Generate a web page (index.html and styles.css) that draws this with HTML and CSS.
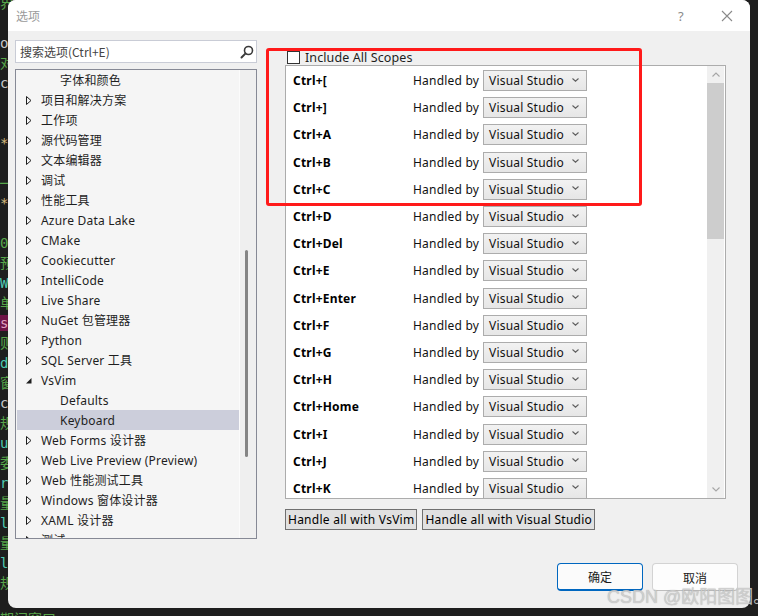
FILE: index.html
```html
<!DOCTYPE html>
<html>
<head>
<meta charset="utf-8">
<link rel="stylesheet" href="styles.css">
</head>
<body>
<div class="desk">
<pre class="code"><span class="g">界</span>

<span class="w">oF</span>
<span class="g">对</span>
<span class="w">co</span>


<span class="t">*</span>

<span class="g">──</span>
<span class="t">*</span>

<span class="g">0</span>
<span class="g">预</span>
<span class="c">Wi</span>
<span class="g">单</span>
<span class="m">st</span>
<span class="g">则</span>
<span class="c">de</span>
<span class="g">窗</span>
<span class="w">cr</span>
<span class="g">规</span>
<span class="c">ur</span>
<span class="g">委</span>
<span class="c">rV</span>
<span class="g">量</span>
<span class="c">lu</span>
<span class="g">量</span>
<span class="c">lu</span>
<span class="g">规</span></pre>
<div class="taskline">期间窗口</div>

<div class="dialog">
  <div class="titlebar">
    <span class="title">选项</span>
    <span class="tbtn">?</span>
    <span class="tbtn"><svg width="12" height="12" viewBox="0 0 12 12"><path d="M1 1L11 11M11 1L1 11" stroke="#8a8a8a" stroke-width="1.1" fill="none"/></svg></span>
  </div>
  <div class="main">
    <div class="leftcol">
      <div class="search">
        <span class="ph">搜索选项(Ctrl+E)</span>
        <svg class="mag" width="14" height="14" viewBox="0 0 14 14"><circle cx="8.5" cy="5.5" r="4" stroke="#3a3a3a" stroke-width="1.6" fill="none"/><path d="M5.6 8.4L1.5 12.5" stroke="#3a3a3a" stroke-width="2" stroke-linecap="round"/></svg>
      </div>
      <div class="tree">
        <div class="tree-list">
          <div class="node l2">字体和颜色</div>
          <div class="node"><svg class="arr" width="6" height="9" viewBox="0 0 6 9"><path d="M0.5 0.5L5 4.5L0.5 8.5Z" fill="none" stroke="#1e1e1e"/></svg>项目和解决方案</div>
          <div class="node"><svg class="arr" width="6" height="9" viewBox="0 0 6 9"><path d="M0.5 0.5L5 4.5L0.5 8.5Z" fill="none" stroke="#1e1e1e"/></svg>工作项</div>
          <div class="node"><svg class="arr" width="6" height="9" viewBox="0 0 6 9"><path d="M0.5 0.5L5 4.5L0.5 8.5Z" fill="none" stroke="#1e1e1e"/></svg>源代码管理</div>
          <div class="node"><svg class="arr" width="6" height="9" viewBox="0 0 6 9"><path d="M0.5 0.5L5 4.5L0.5 8.5Z" fill="none" stroke="#1e1e1e"/></svg>文本编辑器</div>
          <div class="node"><svg class="arr" width="6" height="9" viewBox="0 0 6 9"><path d="M0.5 0.5L5 4.5L0.5 8.5Z" fill="none" stroke="#1e1e1e"/></svg>调试</div>
          <div class="node"><svg class="arr" width="6" height="9" viewBox="0 0 6 9"><path d="M0.5 0.5L5 4.5L0.5 8.5Z" fill="none" stroke="#1e1e1e"/></svg>性能工具</div>
          <div class="node"><svg class="arr" width="6" height="9" viewBox="0 0 6 9"><path d="M0.5 0.5L5 4.5L0.5 8.5Z" fill="none" stroke="#1e1e1e"/></svg>Azure Data Lake</div>
          <div class="node"><svg class="arr" width="6" height="9" viewBox="0 0 6 9"><path d="M0.5 0.5L5 4.5L0.5 8.5Z" fill="none" stroke="#1e1e1e"/></svg>CMake</div>
          <div class="node"><svg class="arr" width="6" height="9" viewBox="0 0 6 9"><path d="M0.5 0.5L5 4.5L0.5 8.5Z" fill="none" stroke="#1e1e1e"/></svg>Cookiecutter</div>
          <div class="node"><svg class="arr" width="6" height="9" viewBox="0 0 6 9"><path d="M0.5 0.5L5 4.5L0.5 8.5Z" fill="none" stroke="#1e1e1e"/></svg>IntelliCode</div>
          <div class="node"><svg class="arr" width="6" height="9" viewBox="0 0 6 9"><path d="M0.5 0.5L5 4.5L0.5 8.5Z" fill="none" stroke="#1e1e1e"/></svg>Live Share</div>
          <div class="node"><svg class="arr" width="6" height="9" viewBox="0 0 6 9"><path d="M0.5 0.5L5 4.5L0.5 8.5Z" fill="none" stroke="#1e1e1e"/></svg>NuGet 包管理器</div>
          <div class="node"><svg class="arr" width="6" height="9" viewBox="0 0 6 9"><path d="M0.5 0.5L5 4.5L0.5 8.5Z" fill="none" stroke="#1e1e1e"/></svg>Python</div>
          <div class="node"><svg class="arr" width="6" height="9" viewBox="0 0 6 9"><path d="M0.5 0.5L5 4.5L0.5 8.5Z" fill="none" stroke="#1e1e1e"/></svg>SQL Server 工具</div>
          <div class="node"><svg class="arr" width="6" height="9" viewBox="0 0 6 9"><path d="M5.5 2L5.5 7.5L0 7.5Z" fill="#1e1e1e"/></svg>VsVim</div>
          <div class="node l2">Defaults</div>
          <div class="node l2 sel">Keyboard</div>
          <div class="node"><svg class="arr" width="6" height="9" viewBox="0 0 6 9"><path d="M0.5 0.5L5 4.5L0.5 8.5Z" fill="none" stroke="#1e1e1e"/></svg>Web Forms 设计器</div>
          <div class="node"><svg class="arr" width="6" height="9" viewBox="0 0 6 9"><path d="M0.5 0.5L5 4.5L0.5 8.5Z" fill="none" stroke="#1e1e1e"/></svg>Web Live Preview (Preview)</div>
          <div class="node"><svg class="arr" width="6" height="9" viewBox="0 0 6 9"><path d="M0.5 0.5L5 4.5L0.5 8.5Z" fill="none" stroke="#1e1e1e"/></svg>Web 性能测试工具</div>
          <div class="node"><svg class="arr" width="6" height="9" viewBox="0 0 6 9"><path d="M0.5 0.5L5 4.5L0.5 8.5Z" fill="none" stroke="#1e1e1e"/></svg>Windows 窗体设计器</div>
          <div class="node"><svg class="arr" width="6" height="9" viewBox="0 0 6 9"><path d="M0.5 0.5L5 4.5L0.5 8.5Z" fill="none" stroke="#1e1e1e"/></svg>XAML 设计器</div>
          <div class="node"><svg class="arr" width="6" height="9" viewBox="0 0 6 9"><path d="M0.5 0.5L5 4.5L0.5 8.5Z" fill="none" stroke="#1e1e1e"/></svg>测试</div>
        </div>
        <div class="tree-scroll"><div class="tthumb"></div></div>
      </div>
    </div>

    <div class="rightcol">
      <div class="scopes"><span class="cb"></span><span>Include All Scopes</span></div>
      <div class="keylist">
        <div class="rows">
          <div class="row"><span class="key">Ctrl+[</span><span class="hb">Handled by</span><span class="combo">Visual Studio<svg class="chev" width="7" height="4" viewBox="0 0 7 4"><path d="M0.5 0.5L3.5 3.2L6.5 0.5" stroke="#606060" fill="none" stroke-width="1.1"/></svg></span></div>
          <div class="row"><span class="key">Ctrl+]</span><span class="hb">Handled by</span><span class="combo">Visual Studio<svg class="chev" width="7" height="4" viewBox="0 0 7 4"><path d="M0.5 0.5L3.5 3.2L6.5 0.5" stroke="#606060" fill="none" stroke-width="1.1"/></svg></span></div>
          <div class="row"><span class="key">Ctrl+A</span><span class="hb">Handled by</span><span class="combo">Visual Studio<svg class="chev" width="7" height="4" viewBox="0 0 7 4"><path d="M0.5 0.5L3.5 3.2L6.5 0.5" stroke="#606060" fill="none" stroke-width="1.1"/></svg></span></div>
          <div class="row"><span class="key">Ctrl+B</span><span class="hb">Handled by</span><span class="combo">Visual Studio<svg class="chev" width="7" height="4" viewBox="0 0 7 4"><path d="M0.5 0.5L3.5 3.2L6.5 0.5" stroke="#606060" fill="none" stroke-width="1.1"/></svg></span></div>
          <div class="row"><span class="key">Ctrl+C</span><span class="hb">Handled by</span><span class="combo">Visual Studio<svg class="chev" width="7" height="4" viewBox="0 0 7 4"><path d="M0.5 0.5L3.5 3.2L6.5 0.5" stroke="#606060" fill="none" stroke-width="1.1"/></svg></span></div>
          <div class="row"><span class="key">Ctrl+D</span><span class="hb">Handled by</span><span class="combo">Visual Studio<svg class="chev" width="7" height="4" viewBox="0 0 7 4"><path d="M0.5 0.5L3.5 3.2L6.5 0.5" stroke="#606060" fill="none" stroke-width="1.1"/></svg></span></div>
          <div class="row"><span class="key">Ctrl+Del</span><span class="hb">Handled by</span><span class="combo">Visual Studio<svg class="chev" width="7" height="4" viewBox="0 0 7 4"><path d="M0.5 0.5L3.5 3.2L6.5 0.5" stroke="#606060" fill="none" stroke-width="1.1"/></svg></span></div>
          <div class="row"><span class="key">Ctrl+E</span><span class="hb">Handled by</span><span class="combo">Visual Studio<svg class="chev" width="7" height="4" viewBox="0 0 7 4"><path d="M0.5 0.5L3.5 3.2L6.5 0.5" stroke="#606060" fill="none" stroke-width="1.1"/></svg></span></div>
          <div class="row"><span class="key">Ctrl+Enter</span><span class="hb">Handled by</span><span class="combo">Visual Studio<svg class="chev" width="7" height="4" viewBox="0 0 7 4"><path d="M0.5 0.5L3.5 3.2L6.5 0.5" stroke="#606060" fill="none" stroke-width="1.1"/></svg></span></div>
          <div class="row"><span class="key">Ctrl+F</span><span class="hb">Handled by</span><span class="combo">Visual Studio<svg class="chev" width="7" height="4" viewBox="0 0 7 4"><path d="M0.5 0.5L3.5 3.2L6.5 0.5" stroke="#606060" fill="none" stroke-width="1.1"/></svg></span></div>
          <div class="row"><span class="key">Ctrl+G</span><span class="hb">Handled by</span><span class="combo">Visual Studio<svg class="chev" width="7" height="4" viewBox="0 0 7 4"><path d="M0.5 0.5L3.5 3.2L6.5 0.5" stroke="#606060" fill="none" stroke-width="1.1"/></svg></span></div>
          <div class="row"><span class="key">Ctrl+H</span><span class="hb">Handled by</span><span class="combo">Visual Studio<svg class="chev" width="7" height="4" viewBox="0 0 7 4"><path d="M0.5 0.5L3.5 3.2L6.5 0.5" stroke="#606060" fill="none" stroke-width="1.1"/></svg></span></div>
          <div class="row"><span class="key">Ctrl+Home</span><span class="hb">Handled by</span><span class="combo">Visual Studio<svg class="chev" width="7" height="4" viewBox="0 0 7 4"><path d="M0.5 0.5L3.5 3.2L6.5 0.5" stroke="#606060" fill="none" stroke-width="1.1"/></svg></span></div>
          <div class="row"><span class="key">Ctrl+I</span><span class="hb">Handled by</span><span class="combo">Visual Studio<svg class="chev" width="7" height="4" viewBox="0 0 7 4"><path d="M0.5 0.5L3.5 3.2L6.5 0.5" stroke="#606060" fill="none" stroke-width="1.1"/></svg></span></div>
          <div class="row"><span class="key">Ctrl+J</span><span class="hb">Handled by</span><span class="combo">Visual Studio<svg class="chev" width="7" height="4" viewBox="0 0 7 4"><path d="M0.5 0.5L3.5 3.2L6.5 0.5" stroke="#606060" fill="none" stroke-width="1.1"/></svg></span></div>
          <div class="row"><span class="key">Ctrl+K</span><span class="hb">Handled by</span><span class="combo">Visual Studio<svg class="chev" width="7" height="4" viewBox="0 0 7 4"><path d="M0.5 0.5L3.5 3.2L6.5 0.5" stroke="#606060" fill="none" stroke-width="1.1"/></svg></span></div>
        </div>
        <div class="vscroll">
          <div class="sbtn"><svg width="8" height="5" viewBox="0 0 8 5"><path d="M0.5 4.5L4 1L7.5 4.5" stroke="#a6a6a6" fill="none" stroke-width="1.1"/></svg></div>
          <div class="vthumb"></div>
          <div class="vtrack"></div>
          <div class="sbtn"><svg width="8" height="5" viewBox="0 0 8 5"><path d="M0.5 0.5L4 4L7.5 0.5" stroke="#a6a6a6" fill="none" stroke-width="1.1"/></svg></div>
        </div>
      </div>
      <div class="bulk">
        <button class="bbtn">Handle all with VsVim</button>
        <button class="bbtn">Handle all with Visual Studio</button>
      </div>
    </div>
  </div>
  <div class="footer">
    <button class="fbtn ok">确定</button>
    <button class="fbtn">取消</button>
  </div>
  <div class="annot"></div>
</div>
<div class="wm">CSDN @欧阳图图。</div>
</div>
</body>
</html>
```

FILE: styles.css
```css
* { box-sizing: border-box; }
html, body { margin: 0; padding: 0; }
body { background: #1e1e1e; }
.desk {
  position: relative;
  width: 758px;
  height: 616px;
  overflow: hidden;
  background: #1e1e1e;
}
.code {
  margin: 0;
  margin-top: -7px;
  font-family: "DejaVu Sans Mono", "Noto Sans CJK SC", monospace;
  font-size: 14px;
  line-height: 20px;
  color: #dcdcdc;
}
.code .g { color: #57a64a; }
.code .w { color: #c8c8c8; }
.code .t { color: #d7ba7d; }
.code .c { color: #4ec9b0; }
.code .m { color: #e0a0c0; background: #6e1446; }
.taskline {
  position: absolute;
  left: 0;
  top: 609px;
  font-family: "Noto Sans CJK SC", sans-serif;
  font-size: 14px;
  line-height: 18px;
  color: #57a64a;
}
.dialog {
  position: absolute;
  left: 8px;
  top: 0;
  width: 742px;
  height: 608px;
  border-radius: 8px;
  overflow: hidden;
  background: #f0f0f0;
  display: flex;
  flex-direction: column;
  font-family: "Noto Sans", "Noto Sans CJK SC", sans-serif;
  font-size: 12px;
  letter-spacing: 0.2px;
  color: #1e1e1e;
}
.titlebar {
  height: 31px;
  background: #ffffff;
  display: flex;
  align-items: center;
  padding-left: 8px;
}
.title {
  flex: 1;
  font-family: "Noto Sans CJK SC", sans-serif;
  font-size: 12px;
  letter-spacing: 0;
  color: #9a9a9a;
}
.tbtn {
  width: 46px;
  height: 31px;
  display: flex;
  align-items: center;
  justify-content: center;
  color: #8a8a8a;
  font-size: 13px;
}
.main {
  display: flex;
  padding: 9px 0 0 7px;
}
.leftcol {
  width: 242px;
  display: flex;
  flex-direction: column;
  gap: 6px;
}
.search {
  height: 23px;
  border: 1px solid #c9ccd6;
  background: #ffffff;
  display: flex;
  align-items: center;
  padding-left: 4px;
  padding-right: 2px;
}
.ph {
  flex: 1;
  font-family: "Noto Sans CJK SC", sans-serif;
  letter-spacing: 0;
  color: #444;
  font-size: 12px;
}
.mag { display: block; }
.tree {
  height: 470px;
  border: 1px solid #868995;
  display: flex;
  overflow: hidden;
}
.tree-list {
  flex: 1;
  background: #f5f5f5;
}
.node {
  height: 20px;
  display: flex;
  align-items: center;
  padding-left: 9px;
  white-space: nowrap;
  margin-left: 1px;
}
.node .arr { margin-right: 9px; flex-shrink: 0; }
.node.l2 { padding-left: 43px; }
.node.sel { background: #cccedb; }
.tree-scroll {
  width: 17px;
  background: #efefef;
  border-left: 1px solid #fbfbfb;
}
.tthumb {
  width: 3px;
  height: 207px;
  margin-top: 180px;
  margin-left: 5px;
  border-radius: 2px;
  background: #858585;
}
.rightcol {
  margin-left: 28px;
  margin-top: 9px;
  width: 441px;
  display: flex;
  flex-direction: column;
}
.scopes {
  height: 16px;
  display: flex;
  align-items: center;
  gap: 5px;
  padding-left: 2px;
  font-size: 12.5px;
  letter-spacing: 0.1px;
}
.cb {
  width: 13px;
  height: 13px;
  border: 1px solid #333;
  background: #fff;
}
.keylist {
  height: 434px;
  border: 1px solid #acacac;
  background: #fff;
  display: flex;
  overflow: hidden;
}
.rows { flex: 1; padding-top: 1px; }
.row {
  height: 27.2px;
  display: flex;
  align-items: center;
  padding-left: 7px;
  white-space: nowrap;
}
.key {
  width: 120px;
  font-weight: bold;
  color: #000;
}
.hb {
  width: 70px;
  color: #111;
}
.combo {
  width: 104px;
  height: 21px;
  border: 1px solid #acacac;
  background: linear-gradient(#f2f2f2, #e6e6e6);
  display: flex;
  align-items: center;
  padding-left: 5px;
  color: #111;
}
.chev { margin-left: auto; margin-right: 7px; margin-top: -2px; }
.vscroll {
  width: 17px;
  display: flex;
  flex-direction: column;
  background: #f0f0f0;
  margin-right: 1px;
}
.sbtn {
  height: 17px;
  display: flex;
  align-items: center;
  justify-content: center;
}
.vthumb { height: 156px; background: #cdcdcd; }
.vtrack { flex: 1; }
.bulk {
  display: flex;
  gap: 5px;
  margin-top: 10px;
}
.bbtn {
  height: 21px;
  border: 1px solid #707070;
  background: #e1e1e1;
  font-family: "Noto Sans", sans-serif;
  font-size: 12px;
  letter-spacing: 0.25px;
  color: #000;
  padding: 0 2px;
  border-radius: 0;
  line-height: 17px;
}
.footer {
  display: flex;
  justify-content: flex-end;
  gap: 9px;
  padding-right: 12px;
  margin-top: 24px;
}
.fbtn {
  width: 86px;
  height: 28px;
  border: 1px solid #d3d3d3;
  border-bottom-color: #bdbdbd;
  border-radius: 4px;
  background: #fdfdfd;
  font-family: "Noto Sans CJK SC", sans-serif;
  font-size: 12px;
  color: #1a1a1a;
}
.fbtn.ok {
  border: 1px solid #0067c0;
  border-bottom-width: 2px;
  background: #fbfbfb;
}
.annot {
  position: absolute;
  left: 258px;
  top: 48px;
  width: 376px;
  height: 158px;
  border: 3px solid #ff1a1a;
  border-radius: 3px;
}
.wm {
  position: absolute;
  left: 607px;
  top: 585px;
  font-family: "Liberation Sans", "Noto Sans CJK SC", sans-serif;
  font-size: 18px;
  line-height: 24px;
  color: rgba(215, 215, 215, 0.8);
  text-shadow: 0 0 1px rgba(110, 110, 110, 0.6);
  white-space: nowrap;
}
```
